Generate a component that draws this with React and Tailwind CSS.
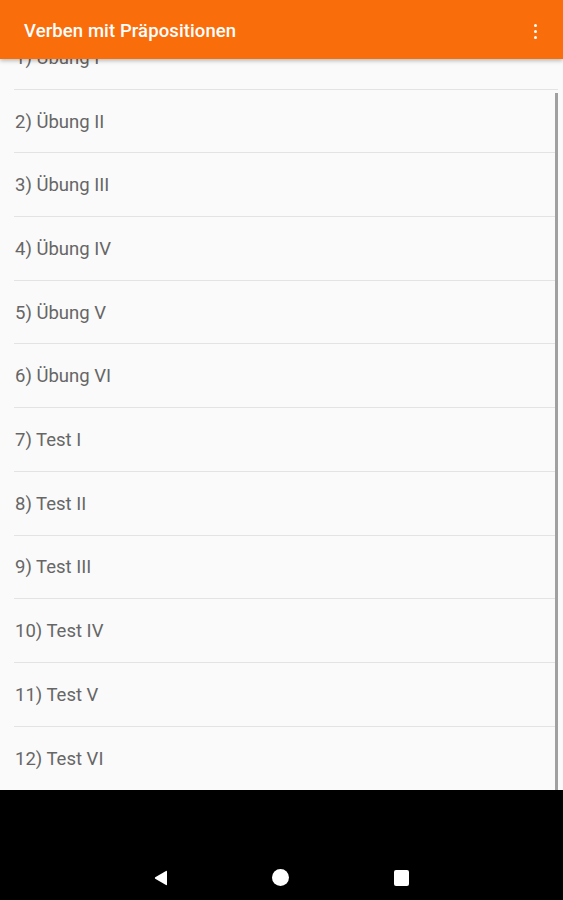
import React from 'react';

const items = [
    '1) Übung I',
    '2) Übung II',
    '3) Übung III',
    '4) Übung IV',
    '5) Übung V',
    '6) Übung VI',
    '7) Test I',
    '8) Test II',
    '9) Test III',
    '10) Test IV',
    '11) Test V',
    '12) Test VI',
];

const App = () => {
    return (
        <div className="w-[563px] h-[900px] flex flex-col overflow-hidden" style={{ fontFamily: 'Roboto, "Liberation Sans", sans-serif' }}>
            {/* Screen content */}
            <div className="relative h-[790px] bg-[#fafafa] overflow-hidden">
                {/* App bar */}
                <header className="absolute top-0 left-0 right-0 h-[59px] z-10 bg-[#fa6d0b] flex items-center justify-between pl-6 pr-[26px] pt-[4px] shadow-[0_2px_4px_rgba(0,0,0,0.25)]">
                    <h1 className="text-white text-[18.5px] font-medium tracking-[0.1px]">Verben mit Präpositionen</h1>
                    <div className="flex flex-col gap-[3px] items-center">
                        <span className="w-[3px] h-[3px] bg-white rounded-full" />
                        <span className="w-[3px] h-[3px] bg-white rounded-full" />
                        <span className="w-[3px] h-[3px] bg-white rounded-full" />
                    </div>
                </header>

                {/* List */}
                <ul className="pt-[26px] ml-[14px] mr-[5px]">
                    {items.map((item, i) => (
                        <li
                            key={item}
                            className={`h-[63.7px] flex items-center pl-px pt-[3px] text-[18.5px] text-[#666666] ${i < items.length - 1 ? 'border-b border-[#e3e3e3]' : ''}`}
                        >
                            {item}
                        </li>
                    ))}
                </ul>

                {/* Scroll indicator */}
                <div className="absolute right-[5px] top-[93px] bottom-0 w-[3px] bg-[#a0a0a0]" />
            </div>

            {/* Navigation bar */}
            <nav className="flex-1 bg-black flex items-end justify-center pb-[14px]">
                <svg width="14" height="16" viewBox="0 0 14 16" className="mr-[104px]">
                    <path d="M13 1.5 L13 14.5 Q13 15.5 12 15 L1.2 8.7 Q0.4 8 1.2 7.3 L12 1 Q13 0.5 13 1.5 Z" fill="white" />
                </svg>
                <div className="w-[17px] h-[17px] rounded-full bg-white mr-[105px]" />
                <div className="w-[15px] h-[16px] rounded-[2px] bg-white" />
            </nav>
        </div>
    );
};

export default App;
